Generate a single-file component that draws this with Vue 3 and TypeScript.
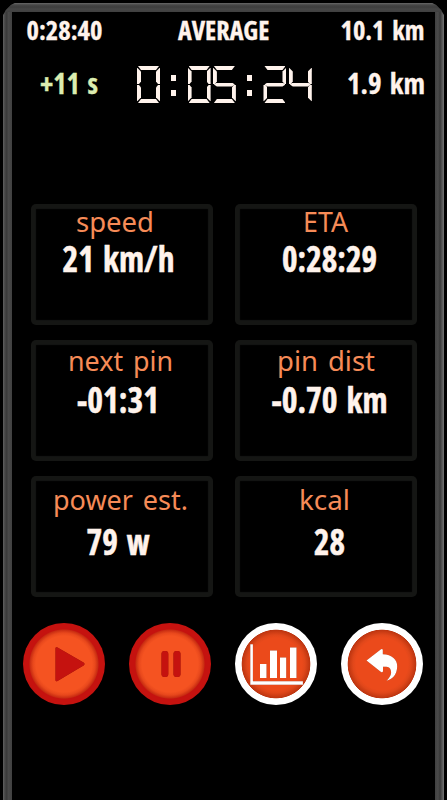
<script setup lang="ts">
interface Fitted {
  text: string
  left: number
  width: number
  baseline: number
}
interface Metric {
  label: Fitted
  value: Fitted
}

const fit = (text: string, left: number, width: number, baseline: number): Fitted => ({ text, left, width, baseline })

const totals: Fitted[] = [
  fit('0:28:40', 14.5, 76, 28),
  fit('AVERAGE', 166, 91.5, 28),
  fit('10.1 km', 328.5, 84, 28),
]
const delta = fit('+11 s', 28, 58, 34)
const remaining = fit('1.9 km', 2, 78, 34)

const metrics: Metric[] = [
  { label: fit('speed', 45, 78, 28), value: fit('21 km/h', 31.5, 112, 68) },
  { label: fit('ETA', 68, 45, 28), value: fit('0:28:29', 47, 95, 68) },
  { label: fit('next pin', 37, 105, 31), value: fit('-01:31', 46, 82, 73) },
  { label: fit('pin dist', 42, 98, 31), value: fit('-0.70 km', 36.5, 116, 73) },
  { label: fit('power est.', 22, 135, 34), value: fit('79 w', 55.5, 63, 78.5) },
  { label: fit('kcal', 64, 51, 34), value: fit('28', 79, 31, 78.5) },
]

const segments: Record<string, string> = {
  '0': 'abcdef',
  '2': 'abged',
  '4': 'fgbc',
  '5': 'afgcd',
}
const clock = '0:05:24'
</script>

<template>
  <main class="screen">
    <div class="frame">
      <div class="panel">
        <svg class="totals" width="423" height="43">
          <text
            v-for="t in totals"
            :key="t.text"
            :x="t.left"
            :y="t.baseline"
            :textLength="t.width"
            lengthAdjust="spacingAndGlyphs"
          >{{ t.text }}</text>
        </svg>

        <section class="pace">
          <svg class="side ahead" width="125" height="48">
            <text :x="delta.left" :y="delta.baseline" :textLength="delta.width" lengthAdjust="spacingAndGlyphs">{{ delta.text }}</text>
          </svg>
          <div class="clock" role="timer" :aria-label="clock">
            <template v-for="(c, i) in clock" :key="i">
              <span v-if="c === ':'" class="colon"><i /><i /></span>
              <span v-else class="digit"><i v-for="s in segments[c]" :key="s" :class="s" /></span>
            </template>
          </div>
          <svg class="side" width="90" height="48">
            <text :x="remaining.left" :y="remaining.baseline" :textLength="remaining.width" lengthAdjust="spacingAndGlyphs">{{ remaining.text }}</text>
          </svg>
        </section>

        <section class="metrics">
          <article v-for="m in metrics" :key="m.label.text" class="card">
            <svg width="182" height="121">
              <text
                class="label"
                :x="m.label.left"
                :y="m.label.baseline"
                :textLength="m.label.width"
                lengthAdjust="spacingAndGlyphs"
              >{{ m.label.text }}</text>
              <text
                class="value"
                :x="m.value.left"
                :y="m.value.baseline"
                :textLength="m.value.width"
                lengthAdjust="spacingAndGlyphs"
              >{{ m.value.text }}</text>
            </svg>
          </article>
        </section>

        <nav class="controls">
          <button class="round muted" aria-label="Start">
            <svg viewBox="0 0 82 82"><path d="M32.5 25.5 Q32.5 23.5 34.5 24.5 L60.5 39.5 Q62.5 41 60.5 42.5 L34.5 58 Q32.5 59 32.5 57 Z" /></svg>
          </button>
          <button class="round muted" aria-label="Pause">
            <svg viewBox="0 0 82 82"><rect x="32.5" y="28" width="6.8" height="26" rx="3" /><rect x="44.5" y="28" width="7" height="26" rx="3" /></svg>
          </button>
          <button class="round" aria-label="Statistics">
            <svg viewBox="0 0 82 82">
              <path d="M15.3 21.3h2.6v37h50v3.5H15.3z" />
              <path d="M25 41h6.5v14H25zM35 27.5h7V55h-7zM45 34.5h6.2V55H45zM55 24.5h6.5V55H55z" />
            </svg>
          </button>
          <button class="round" aria-label="Back">
            <svg viewBox="0 0 82 82"><path d="M25.5 37.5 L40 26.2 Q41.7 25.3 41.8 27 V31.2 C51 31.5 56.5 36.5 56.2 43.5 C56 51.5 51.5 56.5 45.5 57.7 C50 53.5 51.3 49.5 49 45.5 C47.5 43.7 45 43.7 42 43.8 V48.3 Q41.5 50 40 49 Z" /></svg>
          </button>
        </nav>
      </div>
    </div>
  </main>
</template>

<style>
body {
  background: #000;
}
</style>

<style scoped>
.screen {
  box-sizing: border-box;
  height: 800px;
  width: 447px;
  padding: 3px 3px 0;
  background: #000;
  overflow: hidden;
}
.frame {
  box-sizing: border-box;
  width: 441px;
  height: 797px;
  padding: 9px 9px 0;
  background:
    linear-gradient(#686868, #464646 2px, #3d3d3d 4px, #464646 6px, #404040 9px) top / 100% 9px no-repeat,
    linear-gradient(90deg, #606060, #454545 2px, #383838 4px, #4a4a4a 5px, #404040 9px, #404040 432px, #4a4a4a 435px, #383838 437px, #464646 438px, #747474 441px);
  clip-path: polygon(0 12px, 3px 7px, 8px 2px, 12px 0, 429px 0, 433px 2px, 438px 7px, 441px 12px, 441px 100%, 0 100%);
}
.panel {
  width: 423px;
  height: 788px;
  background: #000;
}
svg {
  display: block;
  overflow: visible;
}
text {
  font-family: 'Open Sans', 'Noto Sans', sans-serif;
  font-stretch: 75%;
  font-weight: 700;
  word-spacing: 3px;
  fill: #fff3ec;
  stroke: #fff3ec;
  stroke-width: 0.3px;
}
.totals text {
  font-size: 26px;
}
.pace {
  display: flex;
  height: 56px;
  padding-top: 5px;
}
.side text {
  font-size: 28px;
}
.ahead text {
  fill: #dcedb0;
  stroke: #dcedb0;
}
.clock {
  display: flex;
  width: 208px;
  height: 37px;
  margin-top: 6px;
  gap: 2.3px;
}
.digit {
  position: relative;
  width: 23px;
  height: 37px;
}
.digit i {
  position: absolute;
  background: #fff3ec;
}
.a,
.d,
.g {
  left: 1px;
  width: 21px;
  height: 4px;
}
.a {
  top: 0;
  clip-path: polygon(0 0, 100% 0, 18px 100%, 3px 100%);
}
.g {
  top: 16.5px;
  clip-path: polygon(0 50%, 3px 0, 18px 0, 100% 50%, 18px 100%, 3px 100%);
}
.d {
  bottom: 0;
  clip-path: polygon(3px 0, 18px 0, 100% 100%, 0 100%);
}
.b,
.c,
.e,
.f {
  width: 4px;
  height: 16.5px;
}
.e,
.f {
  left: 0;
  clip-path: polygon(0 0, 100% 4px, 100% 14px, 50% 100%, 0 100%);
}
.b,
.c {
  right: 0;
  clip-path: polygon(100% 0, 100% 100%, 50% 100%, 0 14px, 0 4px);
}
.b,
.f {
  top: 1.5px;
}
.c,
.e {
  bottom: 1.5px;
  transform: scaleY(-1);
}
.colon {
  display: flex;
  flex-direction: column;
  align-items: center;
  gap: 9px;
  width: 23px;
  padding-top: 8.5px;
}
.colon i {
  width: 5px;
  height: 6px;
  background: #fff3ec;
}
.metrics {
  display: grid;
  grid-template-columns: 182px 182px;
  gap: 15px 22px;
  padding: 88px 0 0 19px;
}
.card {
  width: 182px;
  height: 121px;
  border-radius: 5px;
  box-shadow: inset 0 0 1px 5px #151614;
}
.label {
  font-family: 'Noto Sans', 'Open Sans', sans-serif;
  font-size: 28px;
  font-weight: 400;
  font-stretch: 100%;
  fill: #f68b57;
  stroke: none;
}
.value {
  font-size: 35px;
  stroke-width: 0.5px;
}
.controls {
  display: flex;
  gap: 24px;
  padding: 26px 0 0 11.4px;
}
.round {
  box-sizing: border-box;
  flex: none;
  width: 82px;
  height: 82px;
  padding: 0;
  border: 0;
  border-radius: 50%;
  background: radial-gradient(circle, #eb4a1b 0 26px, #e0471a 29px, #bd3510 34px, #fff 34.7px);
}
.round svg {
  width: 82px;
  height: 82px;
  fill: #fff;
  filter: drop-shadow(0 0 0.7px #8e1f05);
}
.muted {
  background: radial-gradient(circle at 41px 41px, #f55321 0 28px, #e8481c 31px, #c92d12 34px, #c5120f 35px);
}
.muted svg {
  fill: #c5120f;
}
</style>
